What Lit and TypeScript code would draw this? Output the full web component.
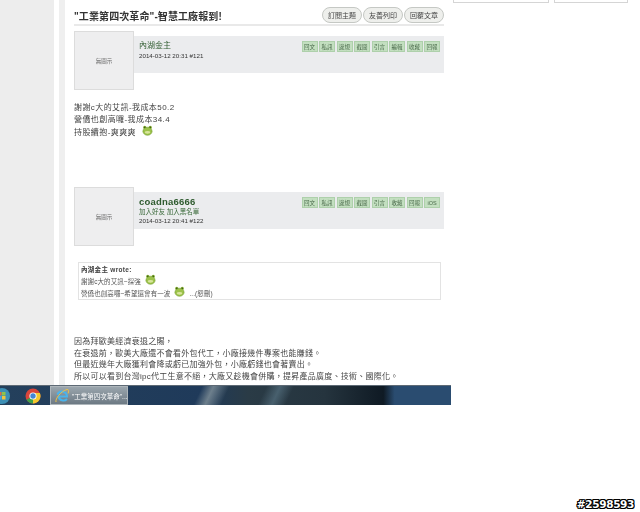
import { LitElement, html, css, svg } from "lit";
import { customElement } from "lit/decorators.js";

const frog = () => html`<svg class="frog" viewBox="0 0 12 12" aria-hidden="true">
  <circle cx="3" cy="2.6" r="1.8" fill="#8ab33a"/><circle cx="9" cy="2.6" r="1.8" fill="#8ab33a"/>
  <ellipse cx="6" cy="6.8" rx="5" ry="4.4" fill="#9cc24a" stroke="#6f9a2c" stroke-width=".6"/>
  <circle cx="3" cy="2.5" r=".8" fill="#35520f"/><circle cx="9" cy="2.5" r=".8" fill="#35520f"/>
  <ellipse cx="6" cy="8" rx="3" ry="1.5" fill="#d8e59b"/>
</svg>`;

interface Post { name: string; bold: boolean; date: string; links: boolean; btns: string[]; }

@customElement("app-root")
export class AppRoot extends LitElement {
  static styles = css`
    :host { display: block; width: 640px; height: 512px; position: relative; overflow: hidden; background: #fff;
      font-family: "Liberation Sans", "Noto Sans CJK TC", sans-serif; color: #333; }
    .page { width: 451px; height: 405px; display: flex; background: #fff; filter: blur(.4px); }
    .rail { width: 54px; background: #ededed; flex: none; }
    .gap { width: 5px; flex: none; }
    .rail2 { width: 6px; background: #efefef; flex: none; }
    .main { width: 386px; flex: none; display: flex; flex-direction: column; height: 385px; overflow: hidden; padding: 0 7px 0 9px; box-sizing: border-box; }
    .head { display: flex; justify-content: space-between; align-items: center; height: 24px; padding-top: 6px; box-sizing: border-box; flex: none; }
    h1 { margin: 0; font-size: 10px; font-weight: bold; letter-spacing: .1px; color: #333; white-space: nowrap; }
    .pills { display: flex; gap: 1px; }
    .pill { width: 40px; height: 16px; border: 1px solid #c5c8c4; border-radius: 8px; background: #eeefec; box-sizing: border-box;
      font-size: 7px; color: #444; display: flex; align-items: center; justify-content: center; white-space: nowrap; }
    .rule { height: 2px; background: #e9e9e9; flex: none; }
    .post { display: flex; position: relative; margin-top: 5px; flex: none; }
    .avatar { width: 60px; height: 59px; box-sizing: border-box; background: #eeeeef; border: 1px solid #dcdcdc; flex: none;
      display: flex; align-items: center; justify-content: center; font-size: 5.5px; color: #666; }
    .band { flex: 1; height: 37px; margin-top: 5px; background: #ebecee; display: flex; justify-content: space-between; padding: 4px 4px 0 5px; box-sizing: border-box; }
    .who { display: flex; flex-direction: column; }
    .name { font-size: 8px; color: #2d5a2d; line-height: 11px; height: 11px; white-space: nowrap; }
    .name.b { font-weight: bold; font-size: 9.5px; letter-spacing: .2px; }
    .links { font-size: 6.5px; color: #3c6b3c; line-height: 8px; height: 8px; margin-top: 1px; white-space: nowrap; }
    .date { font-size: 6.2px; color: #333; line-height: 9px; white-space: nowrap; }
    .btns { display: flex; gap: 1.5px; height: 11px; margin-top: 1px; }
    .btn { width: 16px; height: 11px; box-sizing: border-box; background: #c3dfc0; border: 1px solid #aed0ab; font-size: 5.5px; color: #4a6a4a;
      display: flex; align-items: center; justify-content: center; white-space: nowrap; overflow: hidden; }
    .txt { font-size: 8px; line-height: 11.7px; letter-spacing: .25px; color: #444; white-space: nowrap; }
    .p1 { margin-top: 12px; height: 80px; flex: none; letter-spacing: .42px; }
    .frog { width: 11px; height: 11px; flex: none; }
    .txt .frog { vertical-align: -1px; margin-left: 3px; }
    .quote { margin: 16px 3px 0 4px; height: 38px; box-sizing: border-box; border: 1px solid #e3e3e3; padding: 0 2px; font-size: 6.5px; letter-spacing: .08px; color: #555; white-space: nowrap; flex: none; display: flex; flex-direction: column; }
    .qrow { height: 12px; display: flex; align-items: center; gap: 4px; }
    .qrow b { color: #444; letter-spacing: .3px; }
    .qrow .frog { margin-top: -4px; }
    .p2 { margin-top: 36px; flex: none; }
    .top { position: absolute; top: 0; height: 3px; background: #fff; border: 1px solid #d5d5d5; border-top: 0; box-sizing: border-box; }
    .taskbar { position: absolute; left: 0; top: 385px; width: 451px; height: 20px; display: flex; align-items: center; border-top: 1px solid #5e6a75; box-sizing: border-box;
      background:
        linear-gradient(115deg, transparent 44%, #6d7f8c 46.5%, transparent 50%, transparent 58%, #48606e 61%, transparent 64%),
        linear-gradient(90deg, #24405c 0, #1f3a5a 45%, #2a3b46 55%, #25343e 72%, #0f1a24 85%, #2a4c70 87.5%, #2a4c70 100%);
      filter: blur(.3px); }
    .orb { width: 14px; height: 18px; flex: none; margin-left: -4px; }
    .chrome { width: 16px; height: 16px; flex: none; margin-left: 15px; }
    .task { margin-left: 9px; width: 78px; height: 19px; background: linear-gradient(#9aa5ad, #6d7a84); border: 1px solid #aeb6bb; box-sizing: border-box;
      display: flex; align-items: center; gap: 2px; padding-left: 3px; font-size: 6.5px; color: #fff; white-space: nowrap; overflow: hidden; }
    .ie { width: 16px; height: 16px; flex: none; }
    .wm { position: absolute; right: 6px; bottom: 2px; font: bold 10.5px "DejaVu Sans", sans-serif; color: #fff; letter-spacing: -.35px;
      text-shadow: -1px 0 #000, 1px 0 #000, 0 -1px #000, 0 1px #000, -1px -1px #000, 1px 1px #000, -1px 1px #000, 1px -1px #000; }
  `;

  private postHead(p: Post) {
    return html`<div class="post">
      <div class="avatar">無圖示</div>
      <div class="band">
        <div class="who">
          <div class="name ${p.bold ? "b" : ""}">${p.name}</div>
          ${p.links ? html`<div class="links">加入好友 加入黑名單</div>` : ""}
          <div class="date">${p.date}</div>
        </div>
        <div class="btns">${p.btns.map((b) => html`<span class="btn">${b}</span>`)}</div>
      </div>
    </div>`;
  }

  render() {
    const a: Post = { name: "內湖金主", bold: false, date: "2014-03-12 20:31  #121", links: false, btns: ["回文", "私訊", "違規", "截圖", "引言", "編輯", "收藏", "回報"] };
    const b: Post = { name: "coadna6666", bold: true, date: "2014-03-12 20:41  #122", links: true, btns: ["回文", "私訊", "違規", "截圖", "引言", "收藏", "回報", "iOS"] };
    return html`
      <div class="page">
        <div class="rail"></div><div class="gap"></div><div class="rail2"></div>
        <div class="main">
          <div class="head">
            <h1>"工業第四次革命"-智慧工廠報到!</h1>
            <div class="pills"><span class="pill">訂閱主題</span><span class="pill">友善列印</span><span class="pill">回覆文章</span></div>
          </div>
          <div class="rule"></div>
          ${this.postHead(a)}
          <div class="txt p1">謝謝c大的艾訊-我成本50.2<br>營僑也創高囉-我成本34.4<br>持股續抱-爽爽爽 ${frog()}</div>
          <div>${this.postHead(b)}</div>
          <div class="quote">
            <div class="qrow"><b>內湖金主 wrote:</b></div>
            <div class="qrow"><span>謝謝c大的艾訊~採強</span>${frog()}</div>
            <div class="qrow"><span>營僑也創高囉~希望還會有一波</span>${frog()}<span>...(恕刪)</span></div>
          </div>
          <div class="txt p2">因為拜歐美經濟衰退之賜，<br>在衰退前，歐美大廠還不會看外包代工，小廠接幾件專案也能賺錢。<br>但最近幾年大廠獲利會降或虧已加強外包，小廠虧錢也會著賣出。<br>所以可以看到台灣ipc代工生意不絕，大廠又趁機會併購，提昇產品廣度、技術、國際化。</div>
        </div>
      </div>
      <div class="top" style="left:453px;width:96px"></div>
      <div class="top" style="left:554px;width:74px"></div>
      <div class="taskbar">
        <svg class="orb" viewBox="0 0 14 18"><circle cx="6" cy="9" r="8" fill="#3d8fb5"/><rect x="2" y="5" width="3.5" height="3.5" fill="#e2703a"/><rect x="6" y="5" width="3.5" height="3.5" fill="#8fc34a"/><rect x="2" y="9" width="3.5" height="3.5" fill="#4aa3df"/><rect x="6" y="9" width="3.5" height="3.5" fill="#f2c53d"/></svg>
        <svg class="chrome" viewBox="0 0 16 16">
          ${svg`<circle cx="8" cy="8" r="7.5" fill="#d9453a"/><path d="M8 8 1.5 11.8A7.5 7.5 0 0 0 8 15.5L11.5 9z" fill="#3fa14a"/><path d="M8 15.5A7.5 7.5 0 0 0 14.9 5H8z" fill="#f3c72e"/><circle cx="8" cy="8" r="3.6" fill="#fff"/><circle cx="8" cy="8" r="2.7" fill="#4285d6"/>`}
        </svg>
        <div class="task">
          <svg class="ie" viewBox="0 0 16 16">
            ${svg`<path d="M4.5 8.5h8.5a5 5 0 0 0-9.6-1.8M13 11a5 5 0 0 1-8.5-2.5" fill="none" stroke="#49b4ec" stroke-width="2"/><path d="M2 14C1 11 7 3 13 1.5c2-.4 2 2 1 4" fill="none" stroke="#e8c24a" stroke-width="1"/>`}
          </svg>
          <span>"工業第四次革命"...</span>
        </div>
      </div>
      <div class="wm">#2598593</div>
    `;
  }
}
